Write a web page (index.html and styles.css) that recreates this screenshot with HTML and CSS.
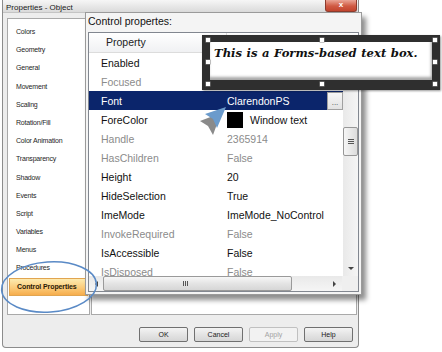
FILE: index.html
```html
<!DOCTYPE html>
<html>
<head>
<meta charset="utf-8">
<title>Properties - Object</title>
<link rel="stylesheet" href="styles.css">
</head>
<body>
<div class="stage">
  <div class="dialog">
    <div class="titlebar">
      <span class="title">Properties - Object</span>
      <span class="close">x</span>
    </div>
    <div class="dlg-body">
      <ul class="nav">
        <li>Colors</li>
        <li>Geometry</li>
        <li>General</li>
        <li>Movement</li>
        <li>Scaling</li>
        <li>Rotation/Fill</li>
        <li>Color Animation</li>
        <li>Transparency</li>
        <li>Shadow</li>
        <li>Events</li>
        <li>Script</li>
        <li>Variables</li>
        <li>Menus</li>
        <li>Procedures</li>
        <li class="active">Control Properties</li>
      </ul>
      <div class="pane"></div>
    </div>
    <div class="buttons">
      <button class="btn">OK</button>
      <button class="btn">Cancel</button>
      <button class="btn disabled">Apply</button>
      <button class="btn">Help</button>
    </div>
  </div>

  <div class="magnifier">
    <div class="mag-label">Control propertes:</div>
    <div class="listbox">
      <div class="lb-header">
        <span class="col-prop">Property</span>
        <span class="col-val"></span>
      </div>
      <div class="lb-main">
        <div class="rows">
          <div class="row"><span class="k">Enabled</span><span class="v"></span></div>
          <div class="row dim"><span class="k">Focused</span><span class="v"></span></div>
          <div class="row sel"><span class="k">Font</span><span class="v">ClarendonPS<span class="ellipsis">...</span></span></div>
          <div class="row"><span class="k">ForeColor</span><span class="v"><span class="swatch"></span>Window text</span></div>
          <div class="row dim"><span class="k">Handle</span><span class="v">2365914</span></div>
          <div class="row dim"><span class="k">HasChildren</span><span class="v">False</span></div>
          <div class="row"><span class="k">Height</span><span class="v">20</span></div>
          <div class="row"><span class="k">HideSelection</span><span class="v">True</span></div>
          <div class="row"><span class="k">ImeMode</span><span class="v">ImeMode_NoControl</span></div>
          <div class="row dim"><span class="k">InvokeRequired</span><span class="v">False</span></div>
          <div class="row"><span class="k">IsAccessible</span><span class="v">False</span></div>
          <div class="row dim"><span class="k">IsDisposed</span><span class="v">False</span></div>
        </div>
        <div class="vscroll">
          <div class="sb-btn"><span class="tri-up"></span></div>
          <div class="vthumb"><span class="grip-h"></span><span class="grip-h"></span><span class="grip-h"></span></div>
          <div class="sb-fill"></div>
          <div class="sb-btn"><span class="tri-down"></span></div>
        </div>
      </div>
      <div class="hscroll">
        <div class="hs-btn"><span class="tri-left"></span></div>
        <div class="hthumb"><span class="grip-v"></span><span class="grip-v"></span><span class="grip-v"></span></div>
        <div class="sb-fill"></div>
        <div class="hs-btn"><span class="tri-right"></span></div>
        <div class="corner"></div>
      </div>
    </div>
  </div>

  <div class="callout">
    <div class="textbox">This is a Forms-based text box.</div>
    <span class="handle h1"></span><span class="handle h2"></span><span class="handle h3"></span>
    <span class="handle h4"></span><span class="handle h5"></span>
    <span class="handle h6"></span><span class="handle h7"></span><span class="handle h8"></span>
  </div>

  <svg class="pointer" viewBox="195 100 35 40" width="35" height="40">
    <polygon points="200,121 221,113 213,135 208,126" fill="#8a8a8a"/>
    <polygon points="205,114 226,107 217,128 213,119" fill="#6b9bcc"/>
  </svg>

  <svg class="ring" viewBox="0 0 100 60" width="100" height="60">
    <ellipse cx="49" cy="29" rx="47.5" ry="25" transform="rotate(-4 49 29)" fill="none" stroke="#5a8ac6" stroke-width="1.5"/>
  </svg>
</div>
</body>
</html>
```

FILE: styles.css
```css
* { box-sizing: border-box; }

body {
  margin: 0;
  background: #ffffff;
  font-family: "Liberation Sans", Arial, sans-serif;
  color: #111;
}

.stage {
  position: relative;
  width: 442px;
  height: 352px;
  overflow: hidden;
}

/* ---------- underlying dialog ---------- */
.dialog {
  margin-left: 2px;
  width: 357px;
  height: 348px;
  border: 1px solid #8c8c8c;
  border-top: none;
  border-radius: 0 0 4px 4px;
  background: #ededed;
  display: flex;
  flex-direction: column;
}

.titlebar {
  height: 13px;
  flex: none;
  display: flex;
  justify-content: space-between;
  align-items: flex-start;
  background: linear-gradient(#f6f6f6, #dadada);
  border-bottom: 1px solid #c4c4c4;
}

.title {
  font-size: 8px;
  line-height: 12px;
  padding-left: 3px;
  padding-top: 2px;
  color: #1a1a1a;
}

.close {
  width: 32px;
  height: 12px;
  margin-right: 1px;
  border: 1px solid #8d3b2d;
  border-top: none;
  border-radius: 0 0 3px 3px;
  background: linear-gradient(#eaa596, #d05a43 55%, #c2442e);
  color: #fff;
  font-size: 8px;
  font-weight: bold;
  line-height: 10px;
  text-align: center;
}

.dlg-body {
  flex: none;
  height: 302px;
  display: flex;
  gap: 1px;
  padding: 5px 1px 0 4px;
}

.nav {
  list-style: none;
  margin: 0;
  padding: 4px 0 0 0;
  width: 83px;
  height: 297px;
  background: #fff;
  border: 1px solid #a9a9a9;
}

.nav li {
  height: 18.2px;
  line-height: 18.2px;
  padding-left: 8px;
  font-size: 7px;
  letter-spacing: -0.2px;
  color: #1e1e1e;
  white-space: nowrap;
}

.nav li.active {
  margin: 0 1px 0 1px;
  padding-left: 7px;
  background: linear-gradient(#fdebb0, #fbcb7a 55%, #f6ad4c);
  border: 1px solid #e1a550;
  line-height: 16.2px;
  font-weight: bold;
  letter-spacing: -0.1px;
  color: #2a1a05;
}

.pane {
  flex: 1;
  height: 297px;
  background: #fff;
  border: 1px solid #a9a9a9;
}

.buttons {
  flex: none;
  display: flex;
  justify-content: flex-end;
  gap: 6px;
  margin-top: 12px;
  padding-right: 5px;
}

.btn {
  width: 49px;
  height: 15px;
  padding: 0;
  border: 1px solid #707070;
  border-radius: 2px;
  background: linear-gradient(#f4f4f4, #e4e4e4 50%, #d6d6d6);
  font-family: "Liberation Sans", Arial, sans-serif;
  font-size: 7px;
  color: #1a1a1a;
}

.btn.disabled {
  border-color: #c0c0c0;
  background: #f2f2f2;
  color: #a3a3a3;
}

/* ---------- magnified panel ---------- */
.magnifier {
  position: absolute;
  left: 85px;
  top: 12px;
  width: 277px;
  height: 283px;
  padding: 0 2px;
  background: #f4f4f4;
  border: 1px solid #9a9a9a;
  box-shadow: 4px 5px 5px rgba(0, 0, 0, 0.45);
}

.mag-label {
  height: 19px;
  line-height: 17px;
  font-size: 10.5px;
  color: #111;
}

.listbox {
  width: 271px;
  height: 260px;
  border: 1px solid #828790;
  background: #fff;
  display: flex;
  flex-direction: column;
}

.lb-header {
  flex: none;
  height: 20px;
  display: flex;
  background: linear-gradient(#ffffff, #f0f1f3);
  border-bottom: 1px solid #dcdcdc;
  font-size: 10.5px;
  line-height: 19px;
  color: #222;
}

.col-prop {
  width: 138px;
  padding-left: 17px;
  border-right: 1px solid #dcdcdc;
}

.col-val {
  flex: 1;
}

.lb-main {
  flex: none;
  height: 223px;
  display: flex;
}

.rows {
  flex: 1;
  overflow: hidden;
}

.row {
  height: 19px;
  display: flex;
  align-items: center;
  font-size: 10.5px;
  color: #111;
  white-space: nowrap;
}

.row .k {
  width: 138px;
  padding-left: 12px;
}

.row .v {
  flex: 1;
  display: flex;
  align-items: center;
  height: 100%;
}

.row.dim { color: #8b8b8b; }

.row.sel {
  background: #0b256b;
  color: #fff;
}

.ellipsis {
  margin-left: auto;
  width: 16px;
  height: 18px;
  background: linear-gradient(#f7f7f7, #e2e2e2);
  border: 1px solid #a0a0a0;
  color: #444;
  font-size: 8px;
  line-height: 20px;
  text-align: center;
}

.swatch {
  width: 16px;
  height: 16px;
  background: #000;
  margin-right: 7px;
}

.vscroll {
  width: 15px;
  flex: none;
  display: flex;
  flex-direction: column;
  background: linear-gradient(90deg, #e9e9e9, #f5f5f5);
}

.sb-btn {
  height: 15px;
  flex: none;
  display: flex;
  align-items: center;
  justify-content: center;
}

.sb-fill { flex: 1; }

.vthumb {
  margin-top: 59px;
  height: 29px;
  flex: none;
  border: 1px solid #979797;
  border-radius: 2px;
  background: linear-gradient(90deg, #f6f6f6, #dcdcdc);
  display: flex;
  flex-direction: column;
  align-items: center;
  justify-content: center;
  gap: 1px;
}

.grip-h {
  width: 6px;
  height: 1px;
  background: #555;
}

.tri-up {
  border-left: 3px solid transparent;
  border-right: 3px solid transparent;
  border-bottom: 3px solid #444;
}

.tri-down {
  border-left: 3.5px solid transparent;
  border-right: 3.5px solid transparent;
  border-top: 3px solid #444;
}

.hscroll {
  flex: none;
  height: 15px;
  display: flex;
  background: linear-gradient(#e9e9e9, #f5f5f5);
}

.hs-btn {
  width: 15px;
  flex: none;
  display: flex;
  align-items: center;
  justify-content: center;
}

.hs-btn:first-child { width: 14px; }

.tri-left {
  border-top: 3px solid transparent;
  border-bottom: 3px solid transparent;
  border-right: 3px solid #444;
}

.tri-right {
  border-top: 3.5px solid transparent;
  border-bottom: 3.5px solid transparent;
  border-left: 3px solid #444;
}

.hthumb {
  width: 189px;
  flex: none;
  border: 1px solid #9a9a9a;
  border-radius: 2px;
  background: linear-gradient(#f7f7f7, #e4e4e4 50%, #d6d6d6);
  display: flex;
  align-items: center;
  justify-content: center;
  gap: 1px;
  padding-right: 24px;
}

.grip-v {
  width: 1px;
  height: 5px;
  background: #555;
}

.corner {
  width: 16px;
  flex: none;
  background: #efefef;
}

/* ---------- text box callout ---------- */
.callout {
  position: absolute;
  left: 202px;
  top: 35px;
  width: 238px;
  height: 55px;
  padding: 7px 8px 10px 8px;
  background: #2f2f2f;
  box-shadow: 1px 1px 2px rgba(0, 0, 0, 0.4);
}

.textbox {
  height: 38px;
  padding: 4px 3px 0 4px;
  background: #fff;
  box-shadow: inset -1px -3px 3px rgba(0, 0, 0, 0.35);
  font-family: "DejaVu Serif", "Liberation Serif", serif;
  font-style: italic;
  font-weight: bold;
  font-size: 11.6px;
  line-height: 15px;
  word-spacing: 0.5px;
  color: #111;
  white-space: nowrap;
}

.handle {
  position: absolute;
  width: 4px;
  height: 4px;
  background: #fff;
  box-shadow: 0 0 0 0.5px #888;
}

.h1 { left: 4px;   top: 3px; }
.h2 { left: 118px; top: 3px; }
.h3 { left: 231px; top: 3px; }
.h4 { left: 4px;   top: 25px; }
.h5 { left: 231px; top: 25px; }
.h6 { left: 4px;   top: 47px; }
.h7 { left: 118px; top: 47px; }
.h8 { left: 231px; top: 47px; }

/* ---------- annotations ---------- */
.pointer {
  position: absolute;
  left: 195px;
  top: 100px;
}

.ring {
  position: absolute;
  left: 0;
  top: 258px;
}
```
